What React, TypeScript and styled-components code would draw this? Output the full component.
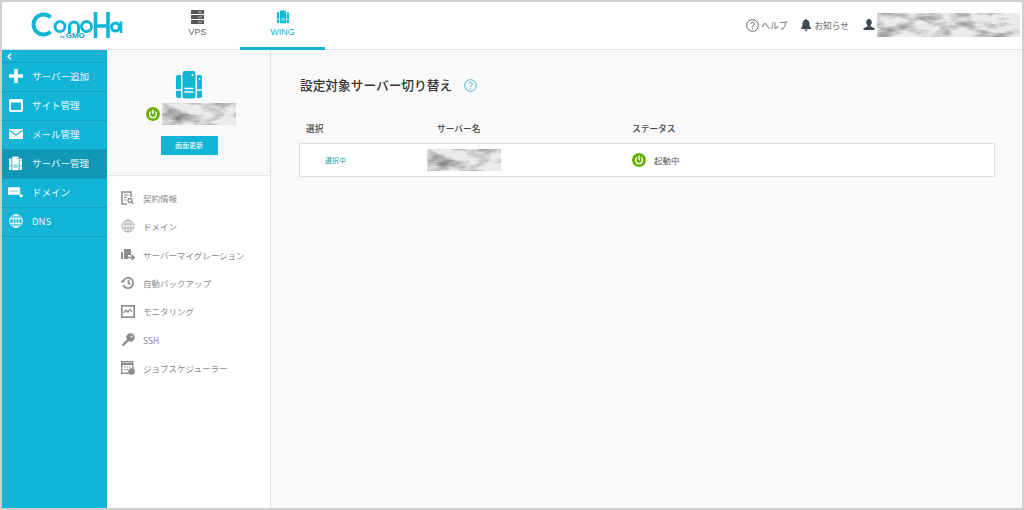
import styled, { createGlobalStyle } from "styled-components"
import { ReactNode } from "react"

const GlobalStyle = createGlobalStyle`
   html, body {
      margin: 0;
      padding: 0;
      background: #fff;
   }
   body {
      font-family: "Noto Sans CJK JP", "Noto Sans", "Liberation Sans", sans-serif;
   }
`

const Frame = styled.div`
   box-sizing: border-box;
   width: 1024px;
   height: 510px;
   border: 2px solid #cfcfcf;
   display: grid;
   grid-template-rows: 48px 1fr;
   overflow: hidden;
   background: #f9f9f9;
`

/* header */
const Header = styled.header`
   display: flex;
   align-items: stretch;
   background: #fff;
   border-bottom: 1px solid #e2e2e2;
   box-sizing: border-box;
`
const LogoSlot = styled.div`
   width: 153px;
   padding: 10px 0 0 29px;
   box-sizing: border-box;
   position: relative;
`
const ByGmo = styled.span`
   position: absolute;
   left: 58px;
   top: 30px;
   font: 700 8px/8px "Liberation Sans", sans-serif;
   color: #0f9fc0;

   small {
      font-size: 4px;
      margin-right: 1px;
   }
`
const Tab = styled.div<{ $active?: boolean }>`
   width: 85px;
   box-sizing: border-box;
   display: flex;
   flex-direction: column;
   align-items: center;
   padding-top: 8px;
   gap: 2px;
   font: 400 9px/12px "Liberation Sans", sans-serif;
   color: ${p => p.$active ? "#13b5d6" : "#666"};
   border-bottom: 3px solid ${p => p.$active ? "#13b5d6" : "transparent"};
   height: 48px;
`
const HeaderRight = styled.div`
   margin-left: auto;
   display: flex;
   align-items: center;
   padding-right: 2px;
   padding-bottom: 1px;
`
const HeaderLink = styled.span<{ $gap: number }>`
   display: flex;
   align-items: center;
   gap: 2px;
   font-size: 8.7px;
   color: #666;
   margin-right: ${p => p.$gap}px;
`

/* body columns */
const Body = styled.div`
   display: grid;
   grid-template-columns: 105px 164px 1fr;
   min-height: 0;
`

const Sidebar = styled.nav`
   background: #13b5d6;
   display: flex;
   flex-direction: column;
`
const Collapse = styled.div`
   height: 12px;
   padding-left: 5px;
   display: flex;
   align-items: center;
   border-bottom: 1px solid #10a3c1;
   color: #fff;
`
const SideItem = styled.div<{ $active?: boolean }>`
   box-sizing: border-box;
   height: 29px;
   display: flex;
   align-items: center;
   gap: 9px;
   padding: 0 0 2px 6px;
   font-size: 9.5px;
   color: #eefafd;
   border-bottom: 1px solid #10a3c1;
   background: ${p => p.$active ? "#0f97b3" : "transparent"};
`
const SideIcon = styled.span`
   width: 15px;
   height: 15px;
   display: flex;
   align-items: center;
   justify-content: center;
`

const SubPanel = styled.aside`
   border-right: 1px solid #e2e2e2;
   background: #fff;
   display: flex;
   flex-direction: column;
`
const ServerCard = styled.div`
   height: 126px;
   box-sizing: border-box;
   background: #f9f9f9;
   border-bottom: 1px solid #e6e6e6;
   display: flex;
   flex-direction: column;
   align-items: center;
   padding: 20px 0 0 1px;
`
const StatusLine = styled.div`
   display: flex;
   align-items: center;
   gap: 2px;
   margin: 3px 0 0 4px;
`
const RefreshButton = styled.button`
   width: 57px;
   height: 19px;
   margin-top: 11px;
   border: 0;
   padding: 0;
   background: #13b5d6;
   color: #fff;
   font: 400 7px/19px "Noto Sans CJK JP", sans-serif;
`
const SubMenu = styled.ul`
   list-style: none;
   margin: 0;
   padding: 8px 0 0 13px;
   display: flex;
   flex-direction: column;
`
const SubItem = styled.li`
   height: 28.3px;
   display: flex;
   align-items: center;
   gap: 8px;
   font-size: 8.5px;
   color: #8c8c8c;
`
const SubIcon = styled.span`
   width: 15px;
   height: 15px;
   display: flex;
   align-items: center;
   justify-content: center;
`

/* main */
const Main = styled.main`
   padding: 26px 27px 0 28px;
`
const Title = styled.h1`
   margin: 0;
   padding-left: 1px;
   display: flex;
   align-items: center;
   gap: 12px;
   font-size: 12.7px;
   line-height: 18px;
   font-weight: 500;
   color: #333;
`
const Columns = styled.div`
   display: grid;
   grid-template-columns: 120px 206px 1fr;
   margin-top: 28px;
   padding-left: 7px;
   font-size: 8.7px;
   font-weight: 500;
   line-height: 13px;
   color: #444;
`
const ColumnName = styled.span`
   margin-left: 11px;
`
const Row = styled.div`
   display: grid;
   grid-template-columns: 127px 205px 1fr;
   align-items: center;
   height: 34px;
   box-sizing: border-box;
   margin-top: 8px;
   background: #fff;
   border: 1px solid #dedede;
`
const Selected = styled.span`
   padding-left: 25px;
   font-size: 7px;
   color: #2a9db5;
`
const RowStatus = styled.span`
   display: flex;
   align-items: center;
   gap: 8px;
   font-size: 8.5px;
   color: #555;
`
const NameCell = styled.span`
   display: flex;
`

const Swatch = styled.svg`
   display: block;
   flex: none;
`

// the masked-out account names: a blurry grey marble texture
function Marble({ width, height, seed }: { width: number, height: number, seed: number }) {
   const id = `marble${seed}${width}`
   return <Swatch width={width} height={height}>
      <filter id={id} x="0" y="0" width="100%" height="100%" colorInterpolationFilters="sRGB">
         <feTurbulence type="fractalNoise" baseFrequency="0.04 0.1" numOctaves={4} seed={seed} />
         <feColorMatrix values="0 0 0 0 0.5  0 0 0 0 0.5  0 0 0 0 0.5  2.2 0 0 0 -0.95" />
         <feGaussianBlur stdDeviation="0.6" />
      </filter>
      <rect width={width} height={height} fill="#ebebeb" />
      <rect width={width} height={height} filter={`url(#${id})`} />
   </Swatch>
}

function Power({ size = 12 }: { size?: number }) {
   return <svg width={size} height={size} viewBox="0 0 14 14" style={{ flex: "none" }}>
      <circle cx="7" cy="7" r="7" fill="#6cb00c" />
      <path d="M4.6 4.9a3.4 3.4 0 1 0 4.8 0" fill="none" stroke="#fff" strokeWidth="1.3" strokeLinecap="round" />
      <path d="M7 3.2v3.6" stroke="#fff" strokeWidth="1.3" strokeLinecap="round" />
   </svg>
}

function Servers({ size, color, detail = "#fff" }: { size: number, color: string, detail?: string }) {
   return <svg width={size} height={size} viewBox="0 0 30 30" style={{ display: "block" }}>
      <path d="M7 5h-3a2 2 0 0 0-2 2v19a2 2 0 0 0 2 2h3zM23 5h3a2 2 0 0 1 2 2v19a2 2 0 0 1-2 2h-3z" fill={color} />
      <rect x="8.5" y="1" width="13" height="27.500" rx="2" fill={color} />
      <circle cx="18.500" cy="5" r="1.100" fill={detail} />
      <circle cx="25.500" cy="9" r="1" fill={detail} />
      <path d="M10.500 18.500h9M10.500 22h9M2 20h5M23 20h5" stroke={detail} strokeWidth="1.400" />
   </svg>
}

function Logo() {
   return <svg width="92" height="28" viewBox="0 0 92 28" fill="none" stroke="#13b5d6" style={{ display: "block" }}>
      <path d="M19.600 5.400a10 10 0 1 0 0 14.200" strokeWidth="4" />
      <circle cx="29" cy="14.500" r="5" strokeWidth="3" />
      <path d="M38.500 21v-6.500a4.500 4.500 0 0 1 9 0v6.500" strokeWidth="3" />
      <circle cx="55.500" cy="14.500" r="5" strokeWidth="3" />
      <path d="M64.500 0v26M77 0v26M64.500 14h12.500" strokeWidth="3.600" />
      <circle cx="84.500" cy="15" r="4" strokeWidth="3" />
      <path d="M90 9.500v11.500" strokeWidth="2.600" />
   </svg>
}

const ic = { fill: "none", stroke: "currentColor" }

const sideIcons: Record<string, ReactNode> = {
   plus: <svg width="14" height="14" viewBox="0 0 14 14"><path d="M7 0v14M0 7h14" stroke="#fff" strokeWidth="3.600" /></svg>,
   site: <svg width="14" height="13" viewBox="0 0 14 13"><rect x="1" y="1" width="12" height="11" rx="1" fill="none" stroke="#fff" strokeWidth="2" /><path d="M1 2.500h12" stroke="#fff" strokeWidth="2" /></svg>,
   mail: <svg width="14" height="10" viewBox="0 0 14 10"><rect width="14" height="10" rx="1" fill="#fff" /><path d="M0.500 1.500l6.500 4.500 6.500-4.500" fill="none" stroke="#13b5d6" strokeWidth="1.200" /></svg>,
   domain: <svg width="16" height="12" viewBox="0 0 16 12"><rect x="0" y="1" width="13" height="8" rx="1" fill="#fff" /><path d="M2.500 5h8" stroke="#13b5d6" strokeWidth="1" strokeDasharray="1 0.600" /><circle cx="14" cy="10" r="1.700" fill="#fff" /></svg>,
   globe: <svg width="14" height="14" viewBox="0 0 14 14" fill="none" stroke="#fff" strokeWidth="1"><circle cx="7" cy="7" r="6.300" /><ellipse cx="7" cy="7" rx="3" ry="6.300" /><path d="M1 4.700h12M1 9.300h12M7 .7v12.600" /></svg>,
}

const subIcons: ReactNode[] = [
   <svg width="13" height="14" viewBox="0 0 13 14" {...ic}><path d="M10 6V1H1v12h5" strokeWidth="1.500" /><path d="M3 4h5M3 6.500h3M3 9h2" strokeWidth="1.100" /><circle cx="9" cy="9.500" r="2" strokeWidth="1.300" /><path d="M10.500 11l2 2" strokeWidth="1.500" /></svg>,
   <svg width="14" height="14" viewBox="0 0 14 14" {...ic} strokeWidth="1" opacity="0.700"><circle cx="7" cy="7" r="6" /><ellipse cx="7" cy="7" rx="3" ry="6" /><path d="M1 5h12M1 9h12M7 1v12" /></svg>,
   <svg width="15" height="14" viewBox="0 0 15 14"><path d="M1 4h2v7H1zM4 1h6a1 1 0 0 1 1 1v5H8v4H4z" fill="currentColor" /><path d="M8 9.500h6M11.500 7l2.500 2.500L11.500 12" fill="none" stroke="currentColor" strokeWidth="1.700" /></svg>,
   <svg width="14" height="14" viewBox="0 0 14 14" {...ic} strokeWidth="1.700"><path d="M2.200 5a5.200 5.200 0 1 1 0 4" /><path d="M7.500 4v3.300l2 1" /><path d="M0 5.500h3.500" /></svg>,
   <svg width="14" height="13" viewBox="0 0 14 13" {...ic}><rect x="0.800" y="0.800" width="12.400" height="11.400" strokeWidth="1.600" /><path d="M2.500 8l2.500-3 2 2 2-2.500 2 2.500" strokeWidth="1.200" /></svg>,
   <svg width="14" height="14" viewBox="0 0 14 14"><circle cx="9.500" cy="4.500" r="4.200" fill="currentColor" /><path d="M7 7L1.500 12.500" stroke="currentColor" strokeWidth="2.400" /><circle cx="10.500" cy="3.500" r="1" fill="#fff" /></svg>,
   <svg width="14" height="14" viewBox="0 0 14 14"><rect x="0.700" y="0.700" width="11" height="11.500" fill="none" stroke="currentColor" strokeWidth="1.400" /><path d="M1 3h10" stroke="currentColor" strokeWidth="2" /><path d="M3 6h1.500M5.500 6H7M8 6h1.500M3 8.500h1.500M5.500 8.500H7" stroke="currentColor" /><circle cx="10.500" cy="10.500" r="3.300" fill="currentColor" /></svg>,
]

const sideItems = [
   { icon: "plus", label: "サーバー追加" },
   { icon: "site", label: "サイト管理" },
   { icon: "mail", label: "メール管理" },
   { icon: "servers", label: "サーバー管理", active: true },
   { icon: "domain", label: "ドメイン" },
   { icon: "globe", label: "DNS" },
]

const subItems = ["契約情報", "ドメイン", "サーバーマイグレーション", "自動バックアップ", "モニタリング", "SSH", "ジョブスケジューラー"]

export default function App() {
   return <>
      <GlobalStyle />
      <Frame>
         <Header>
            <LogoSlot>
               <Logo />
               <ByGmo><small>by</small>GMO</ByGmo>
            </LogoSlot>
            <Tab>
               <svg width="13" height="14" viewBox="0 0 13 14" style={{ display: "block" }}>
                  <rect x="0" y="0" width="13" height="4" rx="0.500" fill="#555" />
                  <rect x="0" y="5" width="13" height="4" rx="0.500" fill="#555" />
                  <rect x="0" y="10" width="13" height="4" rx="0.500" fill="#555" />
                  <path d="M7 2h4M7 7h4M7 12h4" stroke="#ccc" strokeWidth="1" />
               </svg>
               VPS
            </Tab>
            <Tab $active>
               <Servers size={14} color="#13b5d6" />
               WING
            </Tab>
            <HeaderRight>
               <HeaderLink $gap={13}>
                  <svg width="13" height="13" viewBox="0 0 13 13" fill="none" stroke="#666">
                     <circle cx="6.500" cy="6.500" r="5.800" />
                     <path d="M4.700 5a1.800 1.800 0 1 1 2.700 1.600c-.6.400-.9.700-.9 1.500" />
                     <path d="M6.500 9.200v1" />
                  </svg>
                  ヘルプ
               </HeaderLink>
               <HeaderLink $gap={14}>
                  <svg width="12" height="12" viewBox="0 0 12 12" fill="#3f4a50">
                     <path d="M6 0a1 1 0 0 1 1 1c2 .5 2.500 2 2.500 4 0 2 .5 3 1.500 4v1H1V9c1-1 1.500-2 1.500-4 0-2 .5-3.500 2.500-4a1 1 0 0 1 1-1zM4.500 10.500h3a1.500 1.500 0 0 1-3 0z" />
                  </svg>
                  お知らせ
               </HeaderLink>
               <HeaderLink $gap={2}>
                  <svg width="12" height="12" viewBox="0 0 12 12" fill="#3f4a50">
                     <path d="M6 0c1.700 0 2.800 1.300 2.800 3.200 0 1.300-.6 2.400-1.300 3v1l4 2V11H.5V9.200l4-2v-1c-.7-.6-1.300-1.700-1.300-3C3.200 1.300 4.300 0 6 0z" />
                  </svg>
               </HeaderLink>
               <Marble width={143} height={24} seed={7} />
            </HeaderRight>
         </Header>
         <Body>
            <Sidebar>
               <Collapse>
                  <svg width="5" height="7" viewBox="0 0 5 7"><path d="M4 .5L1.200 3.500 4 6.500" fill="none" stroke="#fff" strokeWidth="1.400" /></svg>
               </Collapse>
               {sideItems.map(item =>
                  <SideItem key={item.label} $active={item.active}>
                     <SideIcon>{item.icon === "servers" ? <Servers size={15} color="#fff" detail="#0f97b3" /> : sideIcons[item.icon]}</SideIcon>
                     {item.label}
                  </SideItem>
               )}
            </Sidebar>
            <SubPanel>
               <ServerCard>
                  <Servers size={30} color="#13b5d6" />
                  <StatusLine>
                     <Power size={14} />
                     <Marble width={74} height={22} seed={3} />
                  </StatusLine>
                  <RefreshButton>画面更新</RefreshButton>
               </ServerCard>
               <SubMenu>
                  {subItems.map((label, i) =>
                     <SubItem key={label}>
                        <SubIcon>{subIcons[i]}</SubIcon>
                        {label}
                     </SubItem>
                  )}
               </SubMenu>
            </SubPanel>
            <Main>
               <Title>
                  設定対象サーバー切り替え
                  <svg width="13" height="13" viewBox="0 0 13 13" fill="none" stroke="#3fb9d8">
                     <circle cx="6.500" cy="6.500" r="5.800" />
                     <path d="M4.700 5a1.800 1.800 0 1 1 2.700 1.600c-.6.400-.9.700-.9 1.500" />
                     <path d="M6.500 9.200v1" />
                  </svg>
               </Title>
               <Columns>
                  <span>選択</span>
                  <ColumnName>サーバー名</ColumnName>
                  <span>ステータス</span>
               </Columns>
               <Row>
                  <Selected>選択中</Selected>
                  <NameCell><Marble width={74} height={22} seed={3} /></NameCell>
                  <RowStatus><Power size={14} />起動中</RowStatus>
               </Row>
            </Main>
         </Body>
      </Frame>
   </>
}
